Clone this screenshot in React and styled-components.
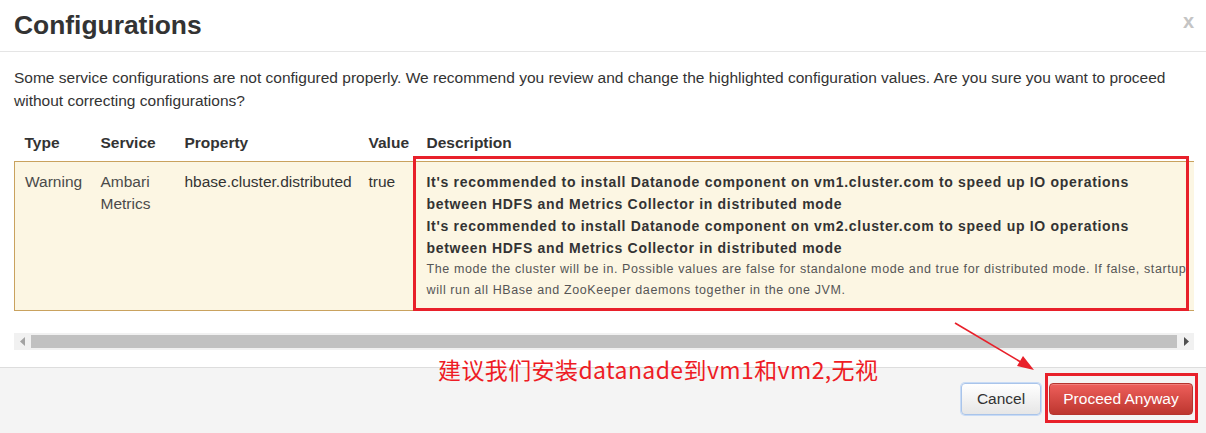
import styled, { createGlobalStyle } from 'styled-components';

const Global = createGlobalStyle`
  html, body {
    margin: 0;
    padding: 0;
    background: #ffffff;
  }
  body {
    font-family: 'Liberation Sans', Arial, sans-serif;
    font-size: 15.5px;
    color: #333333;
  }
`;

const issues = [
  {
    type: 'Warning',
    service: ['Ambari', 'Metrics'],
    property: 'hbase.cluster.distributed',
    value: 'true',
    messages: [
      "It's recommended to install Datanode component on vm1.cluster.com to speed up IO operations between HDFS and Metrics Collector in distributed mode",
      "It's recommended to install Datanode component on vm2.cluster.com to speed up IO operations between HDFS and Metrics Collector in distributed mode",
    ],
    note:
      'The mode the cluster will be in. Possible values are false for standalone mode and true for distributed mode. If false, startup will run all HBase and ZooKeeper daemons together in the one JVM.',
  },
];

const App = () => {
  return (
    <Modal>
      <Global />
      <Header>
        <Title>Configurations</Title>
        <Close>x</Close>
      </Header>
      <Body>
        <Lead>
          Some service configurations are not configured properly. We recommend you review and change the
          highlighted configuration values. Are you sure you want to proceed without correcting configurations?
        </Lead>
        <TableWrap>
          <Table>
            <colgroup>
              <col style={{ width: 76 }} />
              <col style={{ width: 84 }} />
              <col style={{ width: 184 }} />
              <col style={{ width: 58 }} />
              <col />
            </colgroup>
            <thead>
              <tr>
                <Th>Type</Th>
                <Th>Service</Th>
                <Th>Property</Th>
                <Th>Value</Th>
                <Th>Description</Th>
              </tr>
            </thead>
            <tbody>
              {issues.map((row) => (
                <WarnRow key={row.property}>
                  <Td $muted>{row.type}</Td>
                  <Td $muted>
                    {row.service[0]}
                    <br />
                    {row.service[1]}
                  </Td>
                  <Td>{row.property}</Td>
                  <Td>{row.value}</Td>
                  <Td>
                    <Desc>
                      {row.messages.map((m) => (
                        <Message key={m}>{m}</Message>
                      ))}
                      <Note>{row.note}</Note>
                    </Desc>
                  </Td>
                </WarnRow>
              ))}
            </tbody>
          </Table>
        </TableWrap>
        <Scrollbar>
          <Arrow>
            <svg width='6' height='9' viewBox='0 0 6 9'>
              <path d='M5 0 L0 4.5 L5 9 Z' fill='#a3a3a3' />
            </svg>
          </Arrow>
          <Thumb />
          <Arrow>
            <svg width='6' height='9' viewBox='0 0 6 9'>
              <path d='M1 0 L6 4.5 L1 9 Z' fill='#505050' />
            </svg>
          </Arrow>
        </Scrollbar>
      </Body>
      <Footer>
        <Button>Cancel</Button>
        <Button $danger>Proceed Anyway</Button>
      </Footer>

      <Mark $left={413} $top={156} $width={776} $height={155} />
      <Mark $left={1045} $top={373} $width={153} $height={50} />
      <Annotation>建议我们安装datanade到vm1和vm2,无视</Annotation>
      <Pointer width='1206' height='433' viewBox='0 0 1206 433'>
        <line x1='955' y1='323' x2='1024' y2='364' stroke='#e8202a' strokeWidth='1.6' />
        <path d='M1034 370 L1017 366 L1023 356 Z' fill='#e8202a' />
      </Pointer>
    </Modal>
  );
};

const Modal = styled.div`
  position: relative;
  width: 1206px;
  height: 433px;
  overflow: hidden;
  display: flex;
  flex-direction: column;
  background: #ffffff;
`;

const Header = styled.div`
  display: flex;
  justify-content: space-between;
  align-items: flex-start;
  padding: 9px 12px 10px 14px;
  border-bottom: 1px solid #e5e5e5;
`;

const Title = styled.h3`
  margin: 0;
  font-size: 26.4px;
  line-height: 32px;
  font-weight: 700;
  color: #333333;
`;

const Close = styled.span`
  font-size: 20px;
  font-weight: 700;
  line-height: 22px;
  margin-top: 1px;
  color: #c4c4c4;
`;

const Body = styled.div`
  padding: 14px 14px 0;
`;

const Lead = styled.p`
  margin: 0 0 13px;
  line-height: 23px;
  color: #333333;
`;

const TableWrap = styled.div`
  width: 1180px;
  overflow: hidden;
`;

const Table = styled.table`
  width: 1220px;
  border-collapse: collapse;
  table-layout: fixed;
  margin-bottom: 22px;
`;

const Th = styled.th`
  text-align: left;
  padding: 8px 10px;
  line-height: 20px;
  font-weight: 700;
  color: #333333;
`;

const WarnRow = styled.tr`
  background: #fcf6e3;
  border: 1px solid #c9a25e;
`;

const Td = styled.td`
  vertical-align: top;
  padding: 9px 10px;
  line-height: 22px;
  color: ${(p) => (p.$muted ? '#4a4a4a' : '#333333')};
`;

const Desc = styled.div`
  width: 764px;
`;

const Message = styled.div`
  font-size: 14px;
  letter-spacing: 0.7px;
  font-weight: 700;
  line-height: 22px;
  color: #333333;
`;

const Note = styled.div`
  font-size: 12.5px;
  letter-spacing: 0.6px;
  line-height: 21px;
  color: #555555;
`;

const Scrollbar = styled.div`
  display: flex;
  align-items: stretch;
  width: 1180px;
  height: 17px;
  background: #f1f1f1;
`;

const Arrow = styled.div`
  width: 17px;
  display: flex;
  align-items: center;
  justify-content: center;
`;

const Thumb = styled.div`
  flex: 1;
  margin: 2px 0;
  background: #c1c1c1;
`;

const Footer = styled.div`
  flex: 1;
  margin-top: 17px;
  display: flex;
  justify-content: flex-end;
  align-items: flex-start;
  gap: 8px;
  padding: 15px 13px 0;
  background: #f4f4f4;
  border-top: 1px solid #dddddd;
`;

const Button = styled.button`
  height: 32px;
  padding: 0;
  font-family: 'Liberation Sans', Arial, sans-serif;
  font-size: 15.5px;
  border-radius: 4px;
  cursor: pointer;
  color: ${(p) => (p.$danger ? '#ffffff' : '#333333')};
  background: ${(p) =>
    p.$danger
      ? 'linear-gradient(to bottom, #ee5f5b, #bd362f)'
      : 'linear-gradient(to bottom, #ffffff, #e6e6e6)'};
  border: 1px solid ${(p) => (p.$danger ? '#b5352f' : '#a9c4ea')};
  box-shadow: ${(p) => (p.$danger ? 'inset 0 1px 0 rgba(255,255,255,0.2)' : '0 0 0 1px #c8dbf5')};
  width: ${(p) => (p.$danger ? '144px' : '80px')};
`;

const Mark = styled.div`
  position: absolute;
  left: ${(p) => p.$left}px;
  top: ${(p) => p.$top}px;
  width: ${(p) => p.$width}px;
  height: ${(p) => p.$height}px;
  box-sizing: border-box;
  border: 3px solid #e8202a;
  pointer-events: none;
`;

const Annotation = styled.div`
  position: absolute;
  left: 438px;
  top: 354px;
  font-family: 'Noto Sans CJK SC', 'Microsoft YaHei', sans-serif;
  font-size: 23px;
  letter-spacing: 0.4px;
  line-height: 30px;
  color: #ee1c25;
  white-space: nowrap;
`;

const Pointer = styled.svg`
  position: absolute;
  left: 0;
  top: 0;
  pointer-events: none;
`;

export default App;
